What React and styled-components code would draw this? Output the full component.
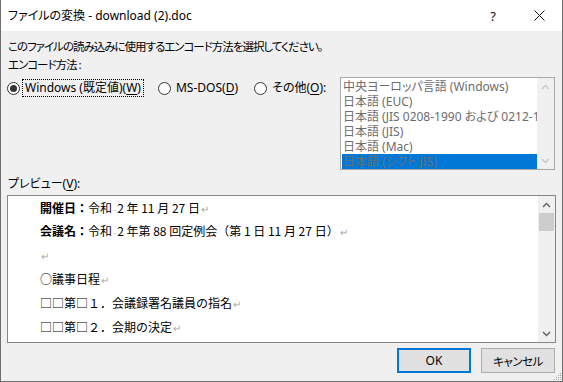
import React from 'react'
import styled, { createGlobalStyle } from 'styled-components'

const GlobalStyle = createGlobalStyle`
    html, body {
        margin: 0;
        padding: 0;
        background: #ffffff;
    }
    * {
        box-sizing: border-box;
    }
`

const uiFont = `"Noto Sans", "Noto Sans CJK JP", sans-serif`
const docFont = `"Noto Sans CJK JP", sans-serif`

// Window frame
const Window = styled.div`
    width: 563px;
    height: 382px;
    display: flex;
    flex-direction: column;
    border: 1px solid #6f6f6f;
    border-top: none;
    background: #f0f0f0;
    font-family: ${uiFont};
    font-size: 12px;
    color: #000;
    font-feature-settings: "palt";
`

const TitleBar = styled.div`
    height: 31px;
    flex: 0 0 31px;
    display: flex;
    align-items: center;
    background: #ffffff;
    padding-left: 7px;
`

const TitleText = styled.span`
    flex: 1;
    font-size: 12px;
    line-height: 16px;
`

const TitleButton = styled.div`
    width: 46px;
    height: 31px;
    display: flex;
    align-items: center;
    justify-content: center;
    font-size: 13px;
    color: #111;
`

const Body = styled.div`
    flex: 1;
    display: flex;
    flex-direction: column;
    padding: 8px 6px 0 6px;
`

const Line = styled.div`
    line-height: 15px;
    height: 15px;
    margin-top: ${p => p.$mt || 0}px;
    padding-left: ${p => p.$pl || 0}px;
    white-space: nowrap;
    font-size: ${p => (p.$jp ? '11.5px' : '12px')};
    letter-spacing: ${p => (p.$jp ? '-1px' : 'normal')};
`

const Key = styled.span`
    text-decoration: underline;
    text-underline-offset: 2px;
`

// Encoding choices
const ChoiceRow = styled.div`
    display: flex;
    align-items: flex-start;
    margin-top: 5px;
`

const RadioGroup = styled.div`
    flex: 1;
    display: flex;
    align-items: center;
    padding-top: 2px;
`

const Option = styled.div`
    display: flex;
    align-items: center;
    margin-right: ${p => p.$gap || 0}px;
`

const RadioCircle = styled.span`
    width: 13px;
    height: 13px;
    border-radius: 50%;
    border: 1px solid #333;
    background: #fff;
    display: flex;
    align-items: center;
    justify-content: center;
    margin-right: 2px;
    &::after {
        content: '';
        display: ${p => (p.$checked ? 'block' : 'none')};
        width: 7px;
        height: 7px;
        border-radius: 50%;
        background: #333;
    }
`

const OptionLabel = styled.span`
    height: 18px;
    line-height: 16px;
    padding: 0 2px;
    border: 1px dotted ${p => (p.$focus ? '#000' : 'transparent')};
    white-space: nowrap;
`

const ListBox = styled.div`
    width: 215px;
    height: 93px;
    border: 1px solid #a8a8a8;
    background: #fff;
    display: flex;
    margin-right: 1px;
`

const ListItems = styled.div`
    flex: 1;
    padding: 1px 0 0 1px;
    overflow: hidden;
`

const ListItem = styled.div`
    height: 15px;
    line-height: 15px;
    padding-left: 1px;
    white-space: nowrap;
    overflow: hidden;
    color: #6d6d6d;
    background: ${p => (p.$selected ? '#0078d7' : 'transparent')};
`

const ScrollBar = styled.div`
    width: 17px;
    display: flex;
    flex-direction: column;
    justify-content: space-between;
    align-items: center;
    background: #f0f0f0;
`

const ArrowBox = styled.div`
    width: 17px;
    height: 17px;
    display: flex;
    align-items: center;
    justify-content: center;
`

const Thumb = styled.div`
    width: 15px;
    height: 18px;
    background: #cdcdcd;
`

const ScrollTrack = styled.div`
    flex: 1;
    display: flex;
    flex-direction: column;
    align-items: center;
`

// Preview
const Preview = styled.div`
    height: 148px;
    margin-top: 4px;
    border: 1px solid #828790;
    background: #fff;
    display: flex;
`

const PreviewText = styled.div`
    flex: 1;
    padding: 1px 0 0 32px;
    font-family: ${docFont};
    font-feature-settings: normal;
    font-size: 12px;
    overflow: hidden;
`

const DocLine = styled.div`
    height: 24px;
    line-height: 24px;
    white-space: nowrap;
    &:first-child {
        height: 22px;
        line-height: 22px;
    }
`

const Bold = styled.span`
    font-weight: 700;
`

const Mark = styled.span`
    color: #a8a8a8;
    font-size: 10px;
    margin-left: 1px;
`

const SpaceMark = styled.span`
    color: #bdbdbd;
    font-size: 9px;
    margin: 0 1px;
`

const Footer = styled.div`
    display: flex;
    justify-content: flex-end;
    gap: 10px;
    margin-top: 5px;
    padding-right: 1px;
    position: relative;
    flex: 1;
`

const Button = styled.div`
    width: 74px;
    height: 25px;
    display: flex;
    align-items: center;
    justify-content: center;
    background: #e1e1e1;
    border: ${p => (p.$default ? '2px solid #0078d7' : '1px solid #adadad')};
    font-size: ${p => (p.$jp ? '11.5px' : '12px')};
    letter-spacing: ${p => (p.$jp ? '-0.5px' : 'normal')};
`

const Grip = styled.svg`
    position: absolute;
    right: -6px;
    bottom: 0;
`

const Chevron = ({ up, color }) => (
    <svg width="9" height="6" viewBox="0 0 9 6">
        <path d={up ? 'M1 5 L4.5 1.5 L8 5' : 'M1 1 L4.5 4.5 L8 1'} fill="none" stroke={color} strokeWidth="1.4" />
    </svg>
)

const listItems = [
    '中央ヨーロッパ言語 (Windows)',
    '日本語 (EUC)',
    '日本語 (JIS 0208-1990 および 0212-1990)',
    '日本語 (JIS)',
    '日本語 (Mac)',
    '日本語 (シフト JIS)',
]

const gripDots = [[6, 0], [4, 2], [6, 2], [2, 4], [4, 4], [6, 4], [0, 6], [2, 6], [4, 6], [6, 6]]

const App = () => {
    return (
        <>
            <GlobalStyle />
            <Window>
                <TitleBar>
                    <TitleText>ファイルの変換 - download (2).doc</TitleText>
                    <TitleButton>?</TitleButton>
                    <TitleButton>
                        <svg width="11" height="11" viewBox="0 0 11 11">
                            <path d="M0.5 0.5 L10.5 10.5 M10.5 0.5 L0.5 10.5" stroke="#111" strokeWidth="1" />
                        </svg>
                    </TitleButton>
                </TitleBar>
                <Body>
                    <Line $pl={1} $jp>このファイルの読み込みに使用するエンコード方法を選択してください。</Line>
                    <Line $mt={3} $pl={1} $jp>エンコード方法 :</Line>
                    <ChoiceRow>
                        <RadioGroup>
                            <Option $gap={14}>
                                <RadioCircle $checked />
                                <OptionLabel $focus>Windows (既定値)(<Key>W</Key>)</OptionLabel>
                            </Option>
                            <Option $gap={13}>
                                <RadioCircle />
                                <OptionLabel>MS-DOS(<Key>D</Key>)</OptionLabel>
                            </Option>
                            <Option>
                                <RadioCircle />
                                <OptionLabel>その他(<Key>O</Key>):</OptionLabel>
                            </Option>
                        </RadioGroup>
                        <ListBox>
                            <ListItems>
                                {listItems.map((item, i) => (
                                    <ListItem key={item} $selected={i === listItems.length - 1}>{item}</ListItem>
                                ))}
                            </ListItems>
                            <ScrollBar>
                                <ArrowBox><Chevron up color="#c8c8c8" /></ArrowBox>
                                <ArrowBox><Chevron color="#c8c8c8" /></ArrowBox>
                            </ScrollBar>
                        </ListBox>
                    </ChoiceRow>
                    <Line $mt={6} $pl={1}>プレビュー(<Key>V</Key>):</Line>
                    <Preview>
                        <PreviewText>
                            <DocLine><Bold>開催日：</Bold>令和<SpaceMark>-</SpaceMark>2 年 11 月 27 日<Mark>↵</Mark></DocLine>
                            <DocLine><Bold>会議名：</Bold>令和<SpaceMark>-</SpaceMark>2 年第 88 回定例会（第 1 日 11 月 27 日）<Mark>↵</Mark></DocLine>
                            <DocLine><Mark>↵</Mark></DocLine>
                            <DocLine>○議事日程<Mark>↵</Mark></DocLine>
                            <DocLine>□□第□１．会議録署名議員の指名<Mark>↵</Mark></DocLine>
                            <DocLine>□□第□２．会期の決定<Mark>↵</Mark></DocLine>
                        </PreviewText>
                        <ScrollBar>
                            <ScrollTrack>
                                <ArrowBox><Chevron up color="#606060" /></ArrowBox>
                                <Thumb />
                            </ScrollTrack>
                            <ArrowBox><Chevron color="#606060" /></ArrowBox>
                        </ScrollBar>
                    </Preview>
                    <Footer>
                        <Button $default>OK</Button>
                        <Button $jp>キャンセル</Button>
                        <Grip width="8" height="8" viewBox="0 0 8 8">
                            {gripDots.map(([x, y]) => (
                                <rect key={`${x}-${y}`} x={x} y={y} width="1" height="1" fill="#a0a0a0" />
                            ))}
                        </Grip>
                    </Footer>
                </Body>
            </Window>
        </>
    )
}

export default App
